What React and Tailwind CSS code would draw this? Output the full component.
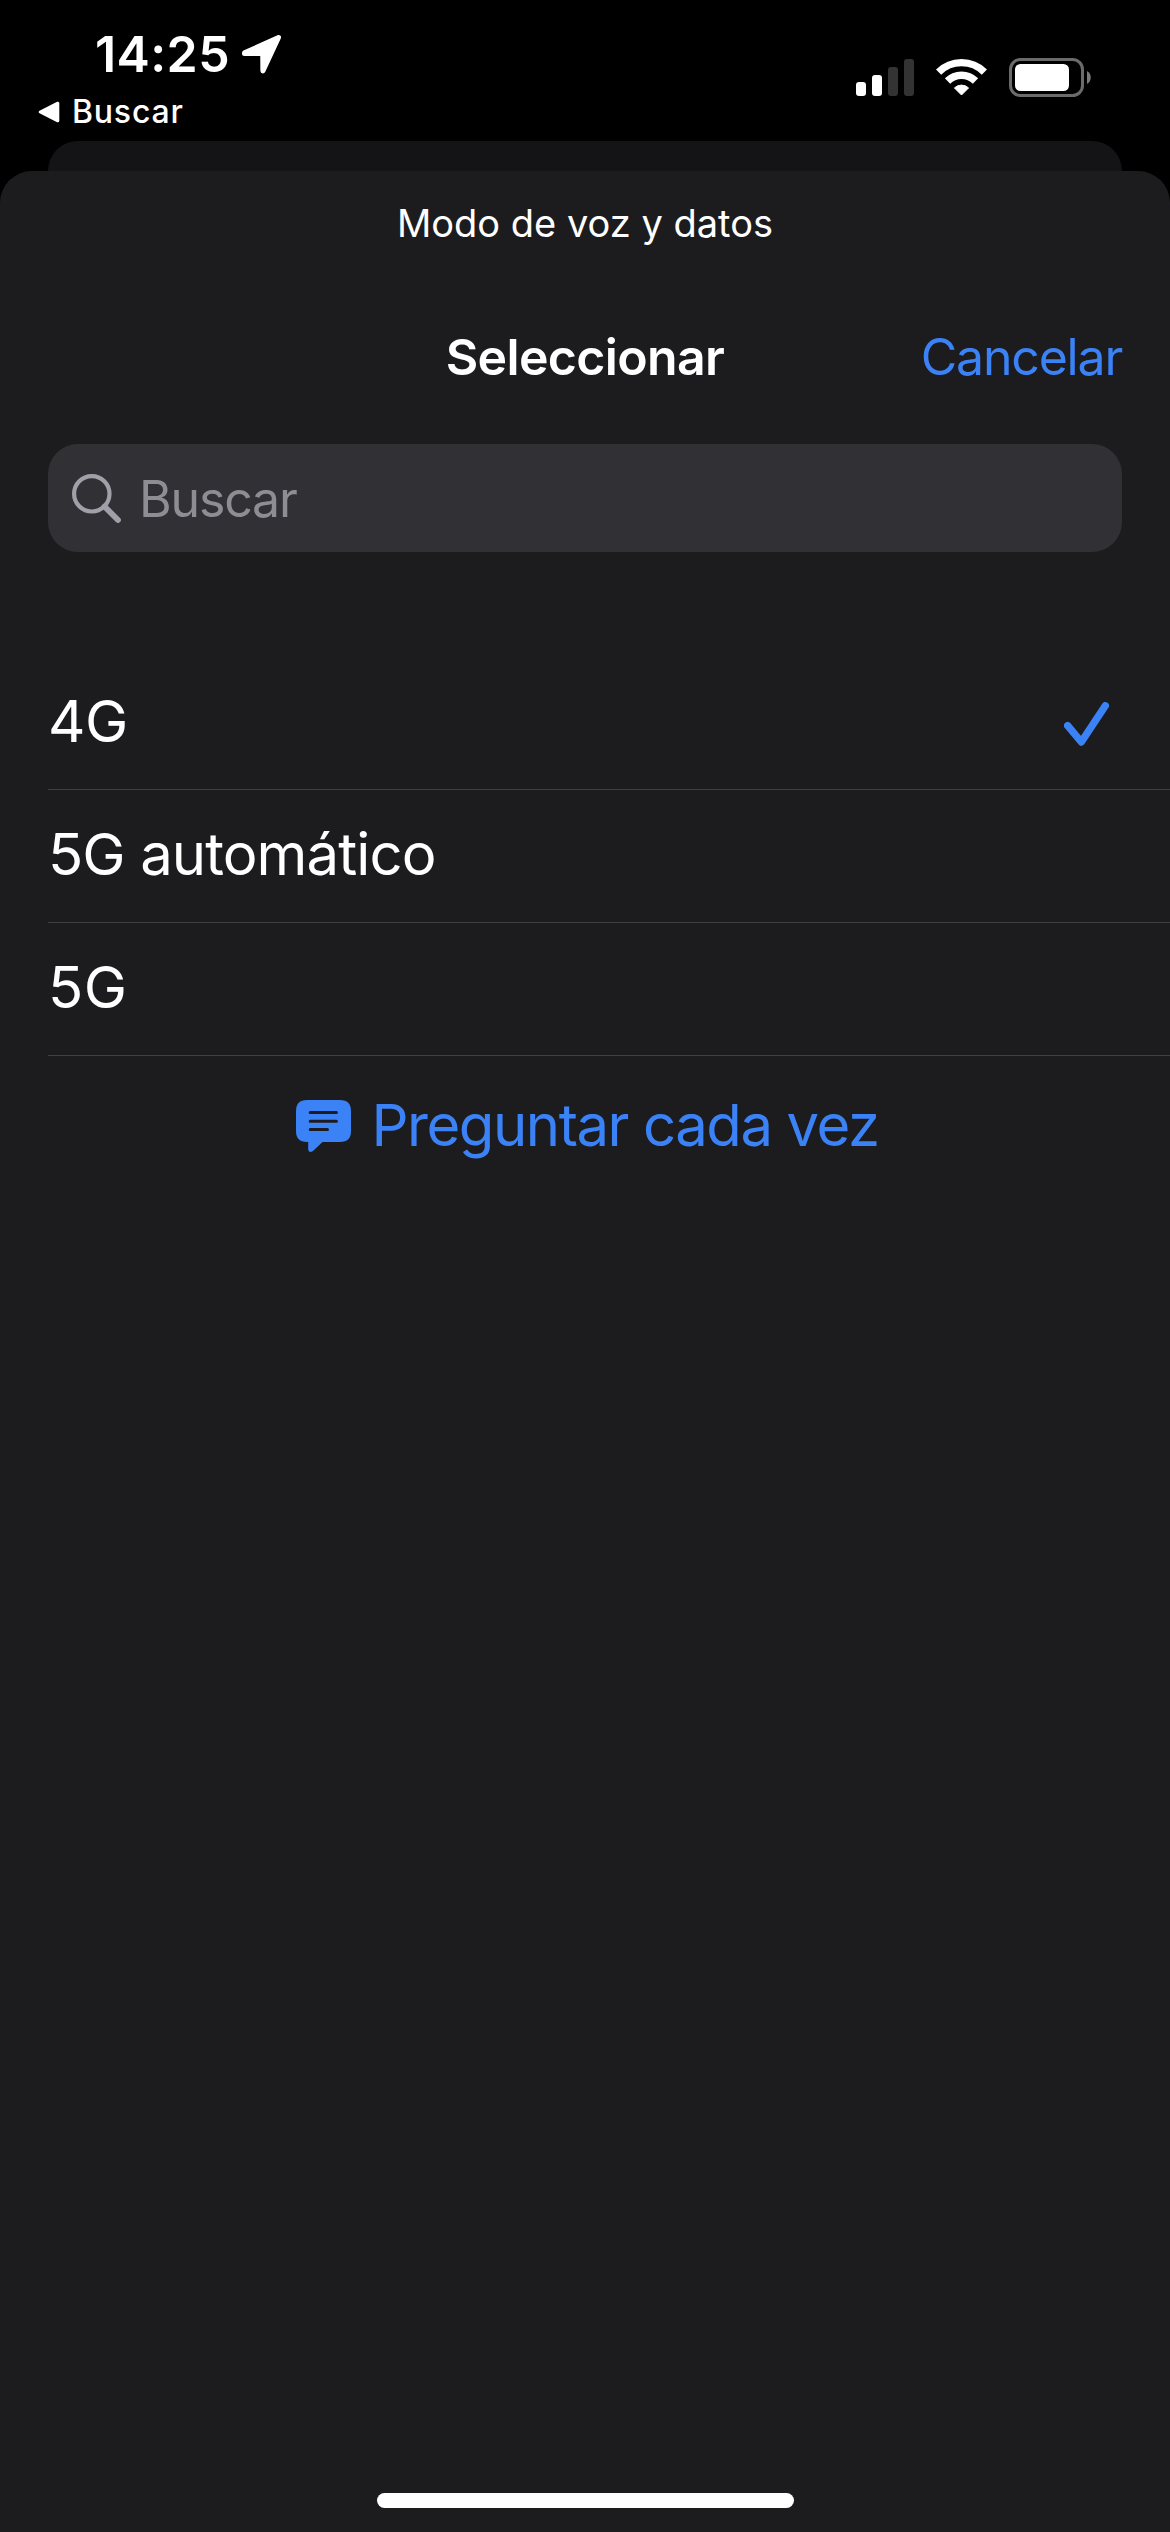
const options = [
  { id: "4g", label: "4G", spacing: "tracking-[-0.4px]" },
  { id: "5g-auto", label: "5G automático", spacing: "tracking-[-0.9px]" },
  { id: "5g", label: "5G", spacing: "tracking-[0.4px]" },
];

function LocationIcon() {
  return (
    <svg width="39" height="39" viewBox="0 0 39 39" className="shrink-0">
      <path
        d="M36.5 2.5 L2.5 17.9 L2.5 18.5 L20.7 18.5 L20.9 36 Z"
        fill="#fff"
        stroke="#fff"
        strokeWidth="5"
        strokeLinejoin="round"
      />
    </svg>
  );
}

function BackIcon() {
  return (
    <svg width="22" height="22" viewBox="0 0 22 22" className="shrink-0">
      <path
        d="M2.2 11 L19.8 2.2 V19.8 Z"
        fill="#fff"
        stroke="#fff"
        strokeWidth="3"
        strokeLinejoin="round"
      />
    </svg>
  );
}

function SignalIcon() {
  return (
    <svg width="58" height="39" viewBox="0 0 58 39">
      <rect x="0" y="24" width="10" height="14" rx="3" fill="#fff" />
      <rect x="16" y="17" width="10" height="21" rx="3" fill="#fff" />
      <rect x="32" y="9" width="10" height="29" rx="3" fill="#333" />
      <rect x="48" y="1" width="10" height="37" rx="3" fill="#333" />
    </svg>
  );
}

function WifiIcon() {
  return (
    <svg width="51" height="39" viewBox="0 0 51 39" fill="none">
      <path d="M2.6 14.1 A32.4 32.4 0 0 1 48.4 14.1" stroke="#fff" strokeWidth="7.3" />
      <path d="M11.5 23 A19.8 19.8 0 0 1 39.5 23" stroke="#fff" strokeWidth="7.5" />
      <path
        d="M18.4 29.9 A10.4 10.4 0 0 1 32.6 29.9 L25.5 37 Z"
        fill="#fff"
        stroke="#fff"
        strokeWidth="1"
        strokeLinejoin="round"
      />
    </svg>
  );
}

function BatteryIcon() {
  return (
    <svg width="82" height="39" viewBox="0 0 82 39">
      <rect x="1.5" y="1.5" width="72" height="36" rx="10" fill="none" stroke="#6b6b6b" strokeWidth="3" />
      <rect x="6" y="6" width="54" height="27" rx="5.5" fill="#fff" />
      <path d="M78 13 C83 15.5 83 23.5 78 26 Z" fill="#7a7a7a" />
    </svg>
  );
}

function SearchIcon() {
  return (
    <svg width="49" height="49" viewBox="0 0 49 49" fill="none" stroke="#a1a0a8" className="shrink-0">
      <circle cx="19.8" cy="19.8" r="17.7" strokeWidth="4.2" />
      <path d="M32.5 32.5 L46 46" strokeWidth="5.8" strokeLinecap="round" />
    </svg>
  );
}

function CheckIcon() {
  return (
    <svg width="45" height="44" viewBox="0 0 45 44" fill="none" className="mt-[6px] shrink-0">
      <path
        d="M3.7 23.7 L17.3 40 L41.3 3.8"
        stroke="#3b82f7"
        strokeWidth="7.4"
        strokeLinecap="round"
        strokeLinejoin="round"
      />
    </svg>
  );
}

function MessageIcon() {
  return (
    <svg width="55" height="52" viewBox="0 0 55 52" className="mt-[2px] shrink-0">
      <path
        d="M11 0 H44 Q55 0 55 11 V31 Q55 42 44 42 H26.5 L17 51 Q12.5 53.5 12.2 49.5 V42 H11 Q0 42 0 31 V11 Q0 0 11 0 Z"
        fill="#3b82f7"
      />
      <path
        d="M14.2 12.6 H40.4 M14.2 21.2 H40.4 M14.2 29.4 H31.5"
        stroke="#1c1c1e"
        strokeWidth="3"
        strokeLinecap="round"
      />
    </svg>
  );
}

function StatusBar() {
  return (
    <div className="flex h-[141px] justify-between pr-[79px]">
      <div className="pt-6">
        <div className="flex h-[60px] items-center pl-[95px]">
          <span className="w-[147px] text-[50px] leading-[60px] font-semibold tracking-[0.4px]">
            14:25
          </span>
          <LocationIcon />
        </div>
        <div className="mt-2 flex h-10 items-center gap-3 pl-[38px]">
          <BackIcon />
          <span className="text-[32px] leading-10 font-medium tracking-[0.8px]">Buscar</span>
        </div>
      </div>

      <div className="flex items-start gap-[22px] pt-[58px]">
        <SignalIcon />
        <WifiIcon />
        <BatteryIcon />
      </div>
    </div>
  );
}

function OptionRow({ option, selected }) {
  return (
    <li className="flex h-[133px] items-center justify-between border-b border-[#404043] pr-[61px] pb-1">
      <span className={`text-[58px] leading-[70px] ${option.spacing}`}>{option.label}</span>
      {selected && <CheckIcon />}
    </li>
  );
}

function App() {
  const selectedId = "4g";

  return (
    <div className="flex h-[2532px] w-[1170px] flex-col overflow-hidden bg-black font-['Inter',sans-serif] text-white">
      <StatusBar />

      <div className="mx-12 h-[30px] shrink-0 rounded-t-[30px] bg-[#141416]" />

      <div className="flex flex-1 flex-col rounded-t-[32px] bg-[#1c1c1e]">
        <p className="h-[104px] text-center text-[38px] leading-[104px]">Modo de voz y datos</p>

        <div className="grid h-[164px] grid-cols-3 items-center px-12 text-[50px] leading-[60px]">
          <h1 className="col-start-2 text-center font-semibold tracking-[-0.65px]">Seleccionar</h1>
          <button type="button" className="text-right tracking-[-1.2px] text-[#3b82f7]">
            Cancelar
          </button>
        </div>

        <div className="mx-12 mt-[5px] flex h-[108px] items-center gap-[18px] rounded-[30px] bg-[#313035] pl-6">
          <SearchIcon />
          <span className="pt-0.5 text-[50px] leading-[60px] tracking-[-1.16px] text-[#8e8d93]">
            Buscar
          </span>
        </div>

        <ul className="mt-[105px] pl-12">
          {options.map((option) => (
            <OptionRow key={option.id} option={option} selected={option.id === selectedId} />
          ))}
        </ul>

        <button
          type="button"
          className="flex h-[138px] items-center justify-center gap-5 pl-[5px] text-[58px] leading-[70px] tracking-[-1.43px] text-[#3b82f7]"
        >
          <MessageIcon />
          Preguntar cada vez
        </button>

        <div className="mt-auto mb-6 ml-[377px] h-[15px] w-[417px] rounded-full bg-white" />
      </div>
    </div>
  );
}

export default App;
